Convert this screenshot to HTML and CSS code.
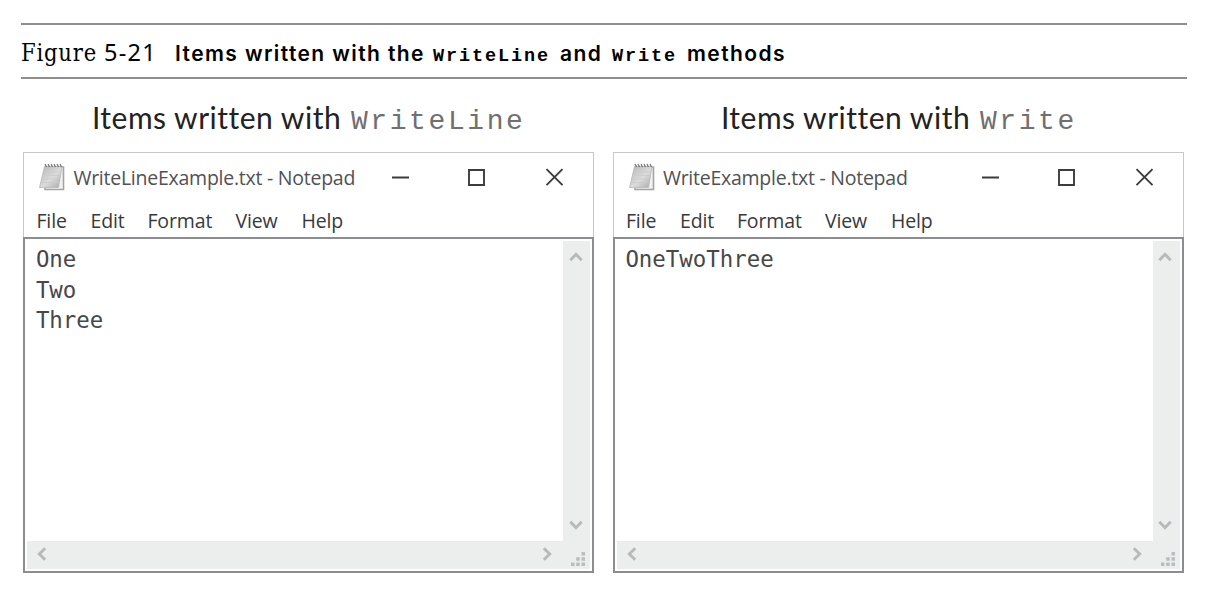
FILE: index.html
```html
<!DOCTYPE html>
<html lang="en">
<head>
<meta charset="utf-8">
<title>Figure 5-21</title>
<link rel="stylesheet" href="styles.css">
</head>
<body>
<svg width="0" height="0" class="defs" aria-hidden="true">
  <defs>
    <linearGradient id="paper" x1="0" y1="0" x2="1" y2="1">
      <stop offset="0" stop-color="#b4b4b4"/><stop offset=".55" stop-color="#dcdcdc"/><stop offset="1" stop-color="#a8a8a8"/>
    </linearGradient>
    <symbol id="notepad" viewBox="0 0 28 29">
      <path d="M8 4H25.500V26.500H7V25" fill="#f2f2f2" stroke="#a4a4a4" stroke-width="1.6"/>
      <path d="M6.500 3.500H24L20.500 24.500H1.500Z" fill="url(#paper)" stroke="#b8b8b8" stroke-width=".8"/>
      <path d="M6 9H22.500M5.300 12.500H22M4.700 16H21.500M4 19.500H21" stroke="#cacaca" stroke-width=".8"/>
      <path d="M7 1l1.500 3M10 1l1.500 3M13 1l1.500 3M16 1l1.500 3M19 1l1.500 3M22 1l1.500 3" stroke="#707070" stroke-width="1.200"/>
    </symbol>
    <symbol id="chevron" viewBox="0 0 14 14"><path d="M1.300 10.200L7 4.300L12.700 10.200" fill="none" stroke="#b8b9bb" stroke-width="2.900"/></symbol>
  </defs>
</svg>
<main class="figure">
  <header class="caption">
    <span class="fig">Figure</span><span class="num">5-21</span>
    <h1 class="title"><span class="t1">Items written with the</span><code class="t2">WriteLine</code><span class="t3">and</span><code class="t4">Write</code><span class="t5">methods</span></h1>
  </header>
  <div class="panels">
    <section class="panel">
      <h2 class="heading"><span class="lead">Items written with</span><code>WriteLine</code></h2>
      <div class="window">
        <div class="titlebar"><svg class="app"><use href="#notepad"/></svg><span class="name">WriteLineExample.txt - Notepad</span>
          <svg class="controls" viewBox="0 0 176 20"><path d="M0 9.500H17M77 2H92V17H77ZM154.500 1.200L170.500 17.200M170.500 1.200L154.500 17.200"/></svg></div>
        <nav class="menu"><span class="file">File</span><span class="edit">Edit</span><span class="format">Format</span><span class="view">View</span><span>Help</span></nav>
        <div class="body">
          <pre class="text">One
Two
Three</pre>
          <div class="vbar"><svg class="chev"><use href="#chevron"/></svg><svg class="chev down"><use href="#chevron"/></svg></div>
          <div class="hbar"><svg class="chev left"><use href="#chevron"/></svg><svg class="chev right"><use href="#chevron"/></svg></div>
          <div class="grip"><svg viewBox="0 0 14 14"><path d="M10.500 0h3.500v3.500h-3.500zM5.200 5.200h3.500v3.500h-3.500zM10.500 5.200h3.500v3.500h-3.500zM0 10.500h3.500v3.500h-3.500zM5.200 10.500h3.500v3.500h-3.500zM10.500 10.500h3.500v3.500h-3.500z"/></svg></div>
        </div>
      </div>
    </section>
    <section class="panel">
      <h2 class="heading second"><span class="lead">Items written with</span><code>Write</code></h2>
      <div class="window">
        <div class="titlebar"><svg class="app"><use href="#notepad"/></svg><span class="name">WriteExample.txt - Notepad</span>
          <svg class="controls" viewBox="0 0 176 20"><path d="M0 9.500H17M77 2H92V17H77ZM154.500 1.200L170.500 17.200M170.500 1.200L154.500 17.200"/></svg></div>
        <nav class="menu"><span class="file">File</span><span class="edit">Edit</span><span class="format">Format</span><span class="view">View</span><span>Help</span></nav>
        <div class="body">
          <pre class="text">OneTwoThree</pre>
          <div class="vbar"><svg class="chev"><use href="#chevron"/></svg><svg class="chev down"><use href="#chevron"/></svg></div>
          <div class="hbar"><svg class="chev left"><use href="#chevron"/></svg><svg class="chev right"><use href="#chevron"/></svg></div>
          <div class="grip"><svg viewBox="0 0 14 14"><path d="M10.500 0h3.500v3.500h-3.500zM5.200 5.200h3.500v3.500h-3.500zM10.500 5.200h3.500v3.500h-3.500zM0 10.500h3.500v3.500h-3.500zM5.200 10.500h3.500v3.500h-3.500zM10.500 10.500h3.500v3.500h-3.500z"/></svg></div>
        </div>
      </div>
    </section>
  </div>
</main>
</body>
</html>
```
FILE: styles.css
```css
* { box-sizing: border-box; }
body { margin: 0; background: #fff; overflow: hidden; }
.defs, svg { display: block; }
span, code { white-space: nowrap; flex: none; }
.figure { padding: 23px 27px 0 21px; }
.caption {
  display: flex; align-items: baseline; height: 56px; padding-top: 11px;
  border-top: 2px solid #8e8e8e; border-bottom: 2px solid #8e8e8e; color: #000;
}
.fig { width: 83px; font: 23.500px/32px "DejaVu Serif Condensed", "DejaVu Serif", serif; letter-spacing: .8px; }
.num { width: 71px; font: 23.500px/32px "Noto Sans", sans-serif; letter-spacing: 1.300px; }
.title { display: flex; align-items: baseline; margin: 0; font: 600 21px/32px Inter, sans-serif; font-optical-sizing: none; font-variation-settings: "opsz" 14; letter-spacing: 1.400px; }
.title code { font: bold 18.500px/32px "Liberation Mono", monospace; letter-spacing: 1.900px; }
.t1 { width: 258px; }
.t2 { width: 127px; }
.t3 { width: 52px; }
.t4 { width: 75px; }
.panels { display: grid; grid-template-columns: 571px 571px; gap: 18.500px; padding-left: 2.400px; }
.heading { display: flex; align-items: baseline; height: 73px; margin: 0; padding: 18px 0 0 68.500px; font: 30px/40px Lato, sans-serif; letter-spacing: .5px; color: #222; }
.heading.second { padding-left: 108px; }
.lead { width: 259px; }
.heading code { font: 28px/40px "Liberation Mono", monospace; letter-spacing: 2.600px; color: #707070; }
.window { height: 421px; border: 1.500px solid #c6c8ca; border-bottom: 0; background: #fff; display: flex; flex-direction: column; }
.titlebar { display: flex; align-items: center; height: 49px; padding-left: 14px; }
.app { width: 28px; height: 29px; margin-right: 7px; }
.name { width: 319px; font: 19.500px/28px "Open Sans", sans-serif; letter-spacing: -.25px; color: #505154; }
.controls { width: 176px; height: 20px; flex: none; fill: none; stroke: #3c3c3e; stroke-width: 1.900; }
.menu { display: flex; height: 35px; padding: 5px 0 0 12px; font: 19.500px/28px "Open Sans", sans-serif; letter-spacing: -.1px; color: #38393b; }
.file { width: 54px; }
.edit { width: 57px; }
.format { width: 88px; }
.view { width: 66px; }
.body {
  display: grid; grid-template: 1fr 28px / 1fr 27px; flex: 1; margin: 0 -1px 0 -1px;
  padding: 2px; border: 2px solid #8b8d90;
}
.text { margin: 0; padding: 3px 0 0 8.500px; font: 22.400px/30.500px "DejaVu Sans Mono", monospace; color: #47484a; }
.vbar { display: flex; flex-direction: column; justify-content: space-between; align-items: center; padding: 9px 2px 9px 0; background: #ebeeed; }
.hbar { display: flex; justify-content: space-between; align-items: center; padding: 0 9px 2px 8px; background: #ebeeed; }
.grip { display: flex; align-items: flex-end; padding: 0 0 3px 8px; background: #ebeeed; }
.grip svg { width: 14px; height: 14px; fill: #bbbdbf; }
.chev { width: 14px; height: 14px; }
.down { transform: rotate(180deg); }
.left { transform: rotate(-90deg); }
.right { transform: rotate(90deg); }
```
